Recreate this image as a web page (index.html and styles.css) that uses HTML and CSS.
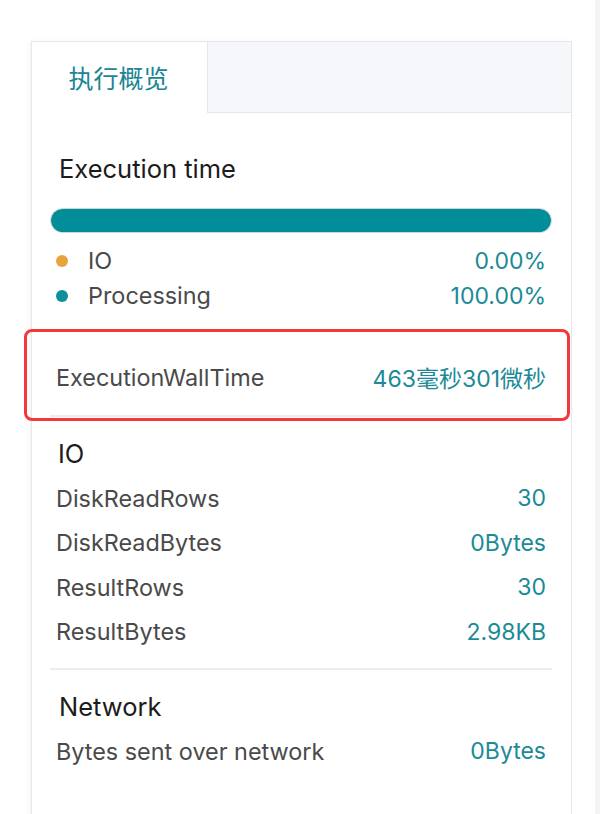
FILE: index.html
```html
<!DOCTYPE html>
<html lang="zh">
<head>
<meta charset="utf-8">
<link rel="stylesheet" href="styles.css">
</head>
<body>
<div class="page">
  <div class="card">
    <div class="tabs">
      <div class="tab active">执行概览</div>
      <div class="tab-rest"></div>
    </div>
    <div class="content">
      <section class="sec-time">
        <h3 class="heading">Execution time</h3>
        <div class="bar"><div class="bar-fill" style="width:100%"></div></div>
        <div class="legend-row">
          <span class="dot dot-io"></span>
          <span class="legend-label">IO</span>
          <span class="value">0.00%</span>
        </div>
        <div class="legend-row">
          <span class="dot dot-proc"></span>
          <span class="legend-label">Processing</span>
          <span class="value">100.00%</span>
        </div>
      </section>
      <section class="sec-wall">
        <div class="row">
          <span class="label">ExecutionWallTime</span>
          <span class="value">463毫秒301微秒</span>
        </div>
        <div class="highlight"></div>
      </section>
      <section class="sec-io">
        <h3 class="heading h-io">IO</h3>
        <div class="row r-io"><span class="label">DiskReadRows</span><span class="value">30</span></div>
        <div class="row r-io"><span class="label">DiskReadBytes</span><span class="value">0Bytes</span></div>
        <div class="row r-io"><span class="label">ResultRows</span><span class="value">30</span></div>
        <div class="row r-io"><span class="label">ResultBytes</span><span class="value">2.98KB</span></div>
      </section>
      <section class="sec-net">
        <h3 class="heading h-net">Network</h3>
        <div class="row"><span class="label">Bytes sent over network</span><span class="value">0Bytes</span></div>
      </section>
    </div>
  </div>
</div>
<div class="scroll-strip"></div>
</body>
</html>
```

FILE: styles.css
```css
* { box-sizing: border-box; }
html, body { margin: 0; padding: 0; }
body {
  width: 600px;
  height: 814px;
  overflow: hidden;
  background: #ffffff;
  display: flex;
  font-family: "Inter", "Noto Sans CJK SC", sans-serif;
}
.page {
  width: 595px;
  padding: 41px 23px 0 31px;
}
.scroll-strip {
  width: 5px;
  background: #f4f4f4;
}
.card {
  width: 541px;
  height: 800px;
  border: 1px solid #e6e8eb;
  border-bottom: none;
  box-shadow: -2px 0 4px rgba(0,0,0,0.04);
  background: #fff;
}
.tabs {
  display: flex;
  height: 71px;
}
.tab.active {
  width: 175px;
  display: flex;
  align-items: center;
  justify-content: center;
  font-size: 25px;
  color: #1a8593;
  padding: 0 2px 2px 0;
}
.tab-rest {
  flex: 1;
  background: #f5f7fa;
  border-left: 1px solid #e4e7ed;
  border-bottom: 1px solid #e4e7ed;
}
.content {
  padding: 0 19px 0 18px;
}
.heading {
  margin: 0;
  font-weight: 400;
  font-size: 25.5px;
  line-height: 44px;
  color: #1c1c1c;
  padding-left: 9px;
}
.sec-time .heading { margin-top: 34px; }
.bar {
  margin-top: 17px;
  height: 25px;
  border-radius: 13px;
  background: #e8e8e8;
  border: 1px solid #d0d4d6;
  overflow: hidden;
}
.bar-fill {
  height: 100%;
  background: #018e98;
  border-radius: 13px;
}
.legend-row {
  display: flex;
  align-items: center;
  height: 35px;
  font-size: 23.4px;
  padding: 0 6px 0 6px;
}
.sec-time .bar + .legend-row { margin-top: 10px; }
.dot {
  width: 12px;
  height: 12px;
  border-radius: 50%;
  margin-right: 20px;
}
.dot-io { background: #e8a33d; }
.dot-proc { background: #0d8e98; }
.legend-label { color: #4a4a4a; flex: 1; }
.value { color: #1b8a96; font-size: 23px; }
.sec-wall {
  position: relative;
  padding: 42px 0 16px;
  border-bottom: 2px solid #ececec;
}
.row {
  display: flex;
  justify-content: space-between;
  align-items: center;
  height: 44px;
  padding: 0 6px;
  font-size: 23.4px;
}
.row.r-io { height: 44.5px; }
.label { color: #4a4a4a; }
.highlight {
  position: absolute;
  left: -26px;
  right: -18px;
  top: 16px;
  bottom: -6px;
  border: 3px solid #f5373b;
  border-radius: 8px;
  pointer-events: none;
}
.sec-io {
  padding-bottom: 14px;
  border-bottom: 2px solid #ececec;
}
.h-io { margin-top: 15px; padding-left: 8px; }
.h-net { margin-top: 15px; }
```
